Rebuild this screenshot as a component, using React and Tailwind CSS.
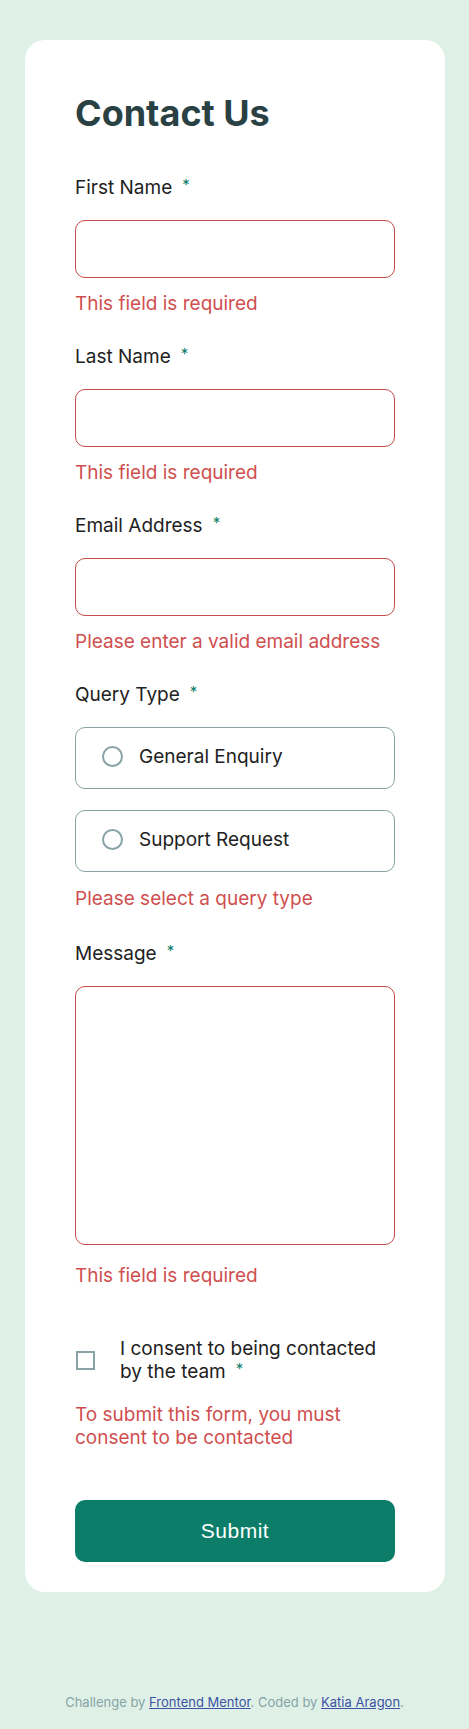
function Label({ children }) {
  return (
    <label className="block text-[19px] leading-[24px] text-[#1e2222]">
      {children}
      <span className="ml-[10px] inline-block align-top text-[15px] leading-[17px] text-[#0c7d69]">*</span>
    </label>
  )
}

function ErrorText({ children, className = '' }) {
  return <p className={`text-[19px] text-[#cf4f4f] ${className}`}>{children}</p>
}

function TextField({ label, error }) {
  return (
    <div>
      <Label>{label}</Label>
      <input
        type="text"
        className="mt-5 block h-[58px] w-full rounded-[10px] border border-[#c44b4b] bg-white px-5 outline-none"
      />
      <ErrorText className="mt-[14px] leading-[24px]">{error}</ErrorText>
    </div>
  )
}

function RadioOption({ label }) {
  return (
    <label className="flex h-[62px] items-center gap-4 rounded-[10px] border border-[#87a3a6] pb-[3px] pl-[26px]">
      <span className="h-[21px] w-[21px] shrink-0 rounded-full border-2 border-[#87a3a6]" />
      <span className="text-[19px] leading-[24px] text-[#1e2222]">{label}</span>
    </label>
  )
}

export default function App() {
  return (
    <div className="min-h-screen bg-[#dff1e7] pt-10 font-['Inter',sans-serif]">
      <form className="ml-[25px] w-[420px] rounded-[20px] bg-white px-[50px] pb-[30px] pt-[52px]">
        <h1 className="text-[36px] font-bold leading-[43px] text-[#2a4144]">Contact Us</h1>

        <div className="mt-[41px] flex flex-col gap-[29px]">
          <TextField label="First Name" error="This field is required" />
          <TextField label="Last Name" error="This field is required" />
          <TextField label="Email Address" error="Please enter a valid email address" />

          <div>
            <Label>Query Type</Label>
            <div className="mt-5 flex flex-col gap-[21px]">
              <RadioOption label="General Enquiry" />
              <RadioOption label="Support Request" />
            </div>
            <ErrorText className="mt-[15px] leading-[24px]">Please select a query type</ErrorText>
          </div>

          <div className="mt-[2px]">
            <Label>Message</Label>
            <textarea className="mt-5 block h-[259px] w-full resize-none rounded-[10px] border border-[#c44b4b] bg-white outline-none" />
            <ErrorText className="mt-[19px] leading-[24px]">This field is required</ErrorText>
          </div>
        </div>

        <div className="mt-[49px] flex items-center gap-[25px] pl-px">
          <span className="h-[19px] w-[19px] shrink-0 border-2 border-[#87a3a6]" />
          <p className="text-[19px] leading-[23px] text-[#1e2222]">
            I consent to being contacted by the team
            <span className="ml-[10px] inline-block align-top text-[15px] leading-[17px] text-[#0c7d69]">*</span>
          </p>
        </div>
        <ErrorText className="mt-5 leading-[23px]">To submit this form, you must consent to be contacted</ErrorText>

        <button
          type="button"
          className="mt-[51px] block h-[62px] w-full rounded-[10px] bg-[#0c7d69] font-['Liberation_Sans',Arial,sans-serif] text-[21px] tracking-[0.5px] text-white"
        >
          Submit
        </button>
      </form>

      <p className="mt-[102px] pb-[18px] text-center text-[13px] leading-[16px] text-[#87a3a6]">
        Challenge by{' '}
        <a href="#" className="text-[#3e52a3] underline">
          Frontend Mentor
        </a>
        . Coded by{' '}
        <a href="#" className="text-[#3e52a3] underline">
          Katia Aragon
        </a>
        .
      </p>
    </div>
  )
}
